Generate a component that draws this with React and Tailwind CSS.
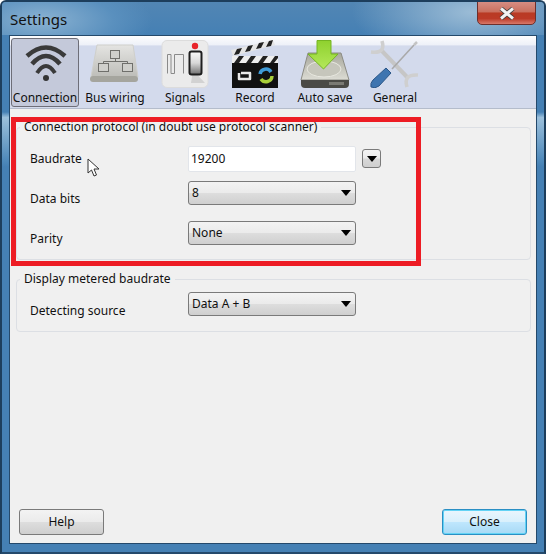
import React from "react";

const Wifi = () => (
  <svg width="48" height="48" viewBox="0 0 48 48" fill="none" stroke="#3a3a3a" strokeLinecap="butt">
    <path d="M6 16 Q25 -1 44 16" strokeWidth="4.5" />
    <path d="M11 24 Q25 8 39 24" strokeWidth="4.5" />
    <path d="M16 33 Q25 19 34 33" strokeWidth="4" />
    <circle cx="25" cy="38" r="3" fill="#333" stroke="none" />
  </svg>
);

const Bus = () => (
  <svg width="50" height="48" viewBox="0 0 50 48">
    <defs>
      <linearGradient id="busg" x1="0" y1="0" x2="0" y2="1">
        <stop offset="0" stopColor="#e4e4e2" />
        <stop offset="1" stopColor="#bdbdb8" />
      </linearGradient>
    </defs>
    <path d="M7 5 H43 L48 37 H1 Z" fill="url(#busg)" stroke="#cfcfcb" />
    <rect x="0" y="36" width="48" height="6" rx="3" fill="#a5a59e" />
    <g fill="#cfcfcb" stroke="#6f6f6b" strokeWidth="1">
      <rect x="20.5" y="10.5" width="9" height="8" />
      <rect x="8.5" y="23.5" width="10" height="8" />
      <rect x="32.5" y="23.5" width="10" height="8" />
      <path d="M25.5 18.5 V21.5 M13.5 23.5 V21.5 H37.5 V23.5" fill="none" />
    </g>
  </svg>
);

const Signals = () => (
  <svg width="48" height="48" viewBox="0 0 48 48">
    <defs>
      <linearGradient id="sw" x1="0" y1="0" x2="0" y2="1">
        <stop offset="0" stopColor="#fafafa" />
        <stop offset="0.5" stopColor="#d8d8d8" />
        <stop offset="1" stopColor="#6e6e6e" />
      </linearGradient>
    </defs>
    <rect x="1" y="0.5" width="46" height="47" rx="5" fill="#ebebeb" stroke="#dcdcdc" />
    <path d="M32 30 L44 43 H30 Z" fill="#d2d2d2" />
    <path d="M6.5 33.5 V14.5 H10 V33.5 H13.5 V14.5 H22.5 V33.5" fill="none" stroke="#8a8a8a" strokeWidth="1" />
    <rect x="28.5" y="11.5" width="12" height="23" rx="2" fill="url(#sw)" stroke="#1e1e1e" strokeWidth="2" />
    <circle cx="34" cy="6" r="3.2" fill="#e8242a" />
  </svg>
);

const Record = () => (
  <svg width="48" height="48" viewBox="0 0 48 48">
    <rect x="1" y="23" width="46" height="25" fill="#111" />
    <path d="M1 16 H47 V23 H1 Z" fill="#eee" />
    <path d="M3 23 L8 16 H13 L8 23 Z M15 23 L20 16 H25 L20 23 Z M27 23 L32 16 H37 L32 23 Z M39 23 L44 16 H47 V18 L43 23 Z" fill="#222" />
    <path d="M0 10 L42 0 L44 5 L2 16 Z" fill="#e6e6e6" />
    <path d="M3 15 L6 9 L11 8 L8 14 Z M14 12 L17 6 L22 5 L19 11 Z M25 9 L28 3 L33 2 L30 8 Z M35 7 L38 1 L42 0 L40 6 Z" fill="#222" />
    <path d="M10 33 H19 V39 H8 V33" fill="none" stroke="#e8e8e8" strokeWidth="2.5" strokeLinejoin="round" />
    <path d="M29 34 A6 6 0 0 1 40 32" fill="none" stroke="#3f9bd8" strokeWidth="3.5" />
    <path d="M41 36 A6 6 0 0 1 30 39" fill="none" stroke="#a8cf3a" strokeWidth="3.5" />
  </svg>
);

const Save = () => (
  <svg width="50" height="48" viewBox="0 0 50 48">
    <defs>
      <linearGradient id="hdd" x1="0" y1="0" x2="0" y2="1">
        <stop offset="0" stopColor="#a8a89c" />
        <stop offset="1" stopColor="#dcdcd4" />
      </linearGradient>
      <linearGradient id="arr" x1="0" y1="0" x2="0" y2="1">
        <stop offset="0" stopColor="#8fd12e" />
        <stop offset="1" stopColor="#b4e85a" />
      </linearGradient>
    </defs>
    <path d="M8 13 H41 L49 40 H1 Z" fill="url(#hdd)" stroke="#8c8c84" />
    <ellipse cx="24" cy="29" rx="17" ry="8" fill="#c6c6bc" stroke="#e8e8e0" />
    <path d="M1 40 H49 V44 Q49 48 45 48 H5 Q1 48 1 44 Z" fill="#4a4a46" />
    <rect x="29" y="42" width="15" height="3" fill="#7a7a74" />
    <path d="M17 0.5 H31 V14 H38 L23.5 29 L8 14 H17 Z" fill="url(#arr)" stroke="#75b522" />
  </svg>
);

const General = () => (
  <svg width="50" height="48" viewBox="0 0 50 48" fill="none">
    <path d="M11 10 L38 38" stroke="#c6c6c6" strokeWidth="4" />
    <path d="M12 1 Q16 14 1 12" stroke="#cfcfcf" strokeWidth="3.6" />
    <path d="M37 47 Q33 34 48 35" stroke="#cfcfcf" strokeWidth="3.6" />
    <path d="M44 5 L22 29" stroke="#a9a9a9" strokeWidth="1.6" />
    <path d="M44 5 L47 2" stroke="#c4c4c4" strokeWidth="2.5" />
    <path d="M16 28 L21 33 L9 46 Q5 49 1 47 Q0 43 3 40 Z" fill="#3f75b0" stroke="#2c5788" strokeWidth="1" />
  </svg>
);

const tabs = [
  ["Connection", <Wifi />],
  ["Bus wiring", <Bus />],
  ["Signals", <Signals />],
  ["Record", <Record />],
  ["Auto save", <Save />],
  ["General", <General />],
];

const Arrow = () => (
  <svg width="10" height="6" viewBox="0 0 10 6">
    <path d="M0 0 H10 L5 6 Z" fill="#000" />
  </svg>
);

const Select = ({ value }) => (
  <div className="w-[168px] h-[24px] pl-[3px] pr-[4px] flex items-center justify-between rounded-[3px] border border-[#7a7a7a] bg-[linear-gradient(#f3f3f3_0%,#ebebeb_48%,#dddddd_52%,#cfcfcf_100%)]">
    <span>{value}</span>
    <Arrow />
  </div>
);

const Row = ({ label, children }) => (
  <div className="h-[40px] flex">
    <div className="w-[158px] flex items-center">{label}</div>
    {children}
  </div>
);

const Group = ({ title, className, children }) => (
  <fieldset className={"ml-[6px] mr-[5px] pl-[13px] pt-[4px] rounded-[4px] border border-[#dcdfe4] " + className}>
    <legend className="-ml-[10px] px-[4px] leading-[16px] h-[16px]">{title}</legend>
    {children}
  </fieldset>
);

const Btn = ({ children, className }) => (
  <div className={"w-[85px] h-[26px] flex items-center justify-center rounded-[3px] " + className}>{children}</div>
);

export default function App() {
  return (
    <div className="relative w-[546px] h-[554px] overflow-hidden flex flex-col rounded-t-[6px] border-2 border-[#1d3e5c] border-b-[#24496b] bg-[#4580b4] bg-[linear-gradient(#4580b4_0%,#4580b4_20%,#9cc0db_21%,#4d88ba_29%,#4580b4_30%)] text-[12px] text-[#101010] font-['Noto_Sans','Open_Sans',sans-serif]">
      <div className="h-[33px] shrink-0 flex justify-between pr-[8px] bg-[radial-gradient(ellipse_110px_42px_at_40px_18px,#8ab2d2_0%,#5a90be_65%,transparent_100%),radial-gradient(ellipse_120px_50px_at_470px_10px,#9bbcd6_0%,transparent_100%),linear-gradient(#5286b4,#4580b4)]">
        <div className="pl-[8px] pt-[7px] text-[15px] leading-[20px] text-[#111]">Settings</div>
        <div className="w-[59px] h-[24px] -mt-[1px] rounded-b-[5px] border border-[#6d2f2c] flex items-center justify-center bg-[linear-gradient(#d68d82_0%,#c9705f_45%,#b93a24_50%,#bb3a27_75%,#d9796a_100%)]">
          <svg width="16" height="13" viewBox="0 0 16 13">
            <path d="M2 1.5 L14 11.5 M14 1.5 L2 11.5" stroke="#3d3d3d" strokeWidth="4.6" />
            <path d="M2 1.5 L14 11.5 M14 1.5 L2 11.5" stroke="#f2f2f2" strokeWidth="3" />
          </svg>
        </div>
      </div>

      <div className="ml-[7px] mr-[7px] h-[509px] shrink-0 border border-[#24496b] bg-[#f0f0f0] flex flex-col">
        <div className="h-[73px] shrink-0 pl-[1px] pt-[2px] flex gap-[2px] border-b border-[#b4bccb] bg-[linear-gradient(#fdfdfe_0%,#eef1f8_12%,#d3daec_14%,#d3daec_100%)]">
          {tabs.map(([name, icon], i) => (
            <div
              key={name}
              className={
                "w-[68px] h-[69px] flex flex-col items-center rounded-[3px] border " +
                (i === 0 ? "border-[#6e6e78] bg-[#c4c9da]" : "border-transparent")
              }
            >
              <div className="h-[50px] pt-[1px] flex items-start justify-center">{icon}</div>
              <div className="leading-[17px] whitespace-nowrap">{name}</div>
            </div>
          ))}
        </div>

        <Group title="Connection protocol (in doubt use protocol scanner)" className="mt-[10px] h-[141px]">
          <Row label="Baudrate">
            <div className="mt-[7px] w-[168px] h-[26px] pl-[2px] leading-[24px] rounded-[2px] border border-[#e2e5ea] bg-white">19200</div>
            <div className="mt-[10px] ml-[6px] w-[19px] h-[19px] flex items-center justify-center rounded-[3px] border border-[#7a7a7a] bg-[linear-gradient(#f3f3f3_0%,#ebebeb_48%,#d8d8d8_52%,#cfcfcf_100%)]">
              <Arrow />
            </div>
          </Row>
          <Row label="Data bits">
            <div className="mt-[2px]"><Select value="8" /></div>
          </Row>
          <Row label="Parity">
            <div className="mt-[2px]"><Select value="None" /></div>
          </Row>
        </Group>

        <Group title="Display metered baudrate" className="mt-[11px] h-[61px]">
          <Row label="Detecting source">
            <div className="mt-[1px]"><Select value="Data A + B" /></div>
          </Row>
        </Group>

        <div className="mt-auto pl-[9px] pr-[9px] pb-[8px] flex justify-between">
          <Btn className="border border-[#7a7a7a] bg-[linear-gradient(#f3f3f3_0%,#ebebeb_48%,#dddddd_52%,#cfcfcf_100%)]">Help</Btn>
          <Btn className="border border-[#2a8fc4] shadow-[inset_0_0_0_1px_#63d3f5] bg-[linear-gradient(#eaf6fd_0%,#d9f0fc_48%,#bee6fd_52%,#a7d9f5_100%)]">Close</Btn>
        </div>
      </div>

      <div className="absolute left-[9px] top-[115px] w-[410px] h-[149px] border-[5px] border-[#ed1c24]" />
      <svg className="absolute left-[85px] top-[156px]" width="13" height="20" viewBox="0 0 13 20">
        <path d="M1 1 V15 L4.5 12 L7 18 L9.5 17 L7 11 H12 Z" fill="#fff" stroke="#333" strokeWidth="1" />
      </svg>
    </div>
  );
}
